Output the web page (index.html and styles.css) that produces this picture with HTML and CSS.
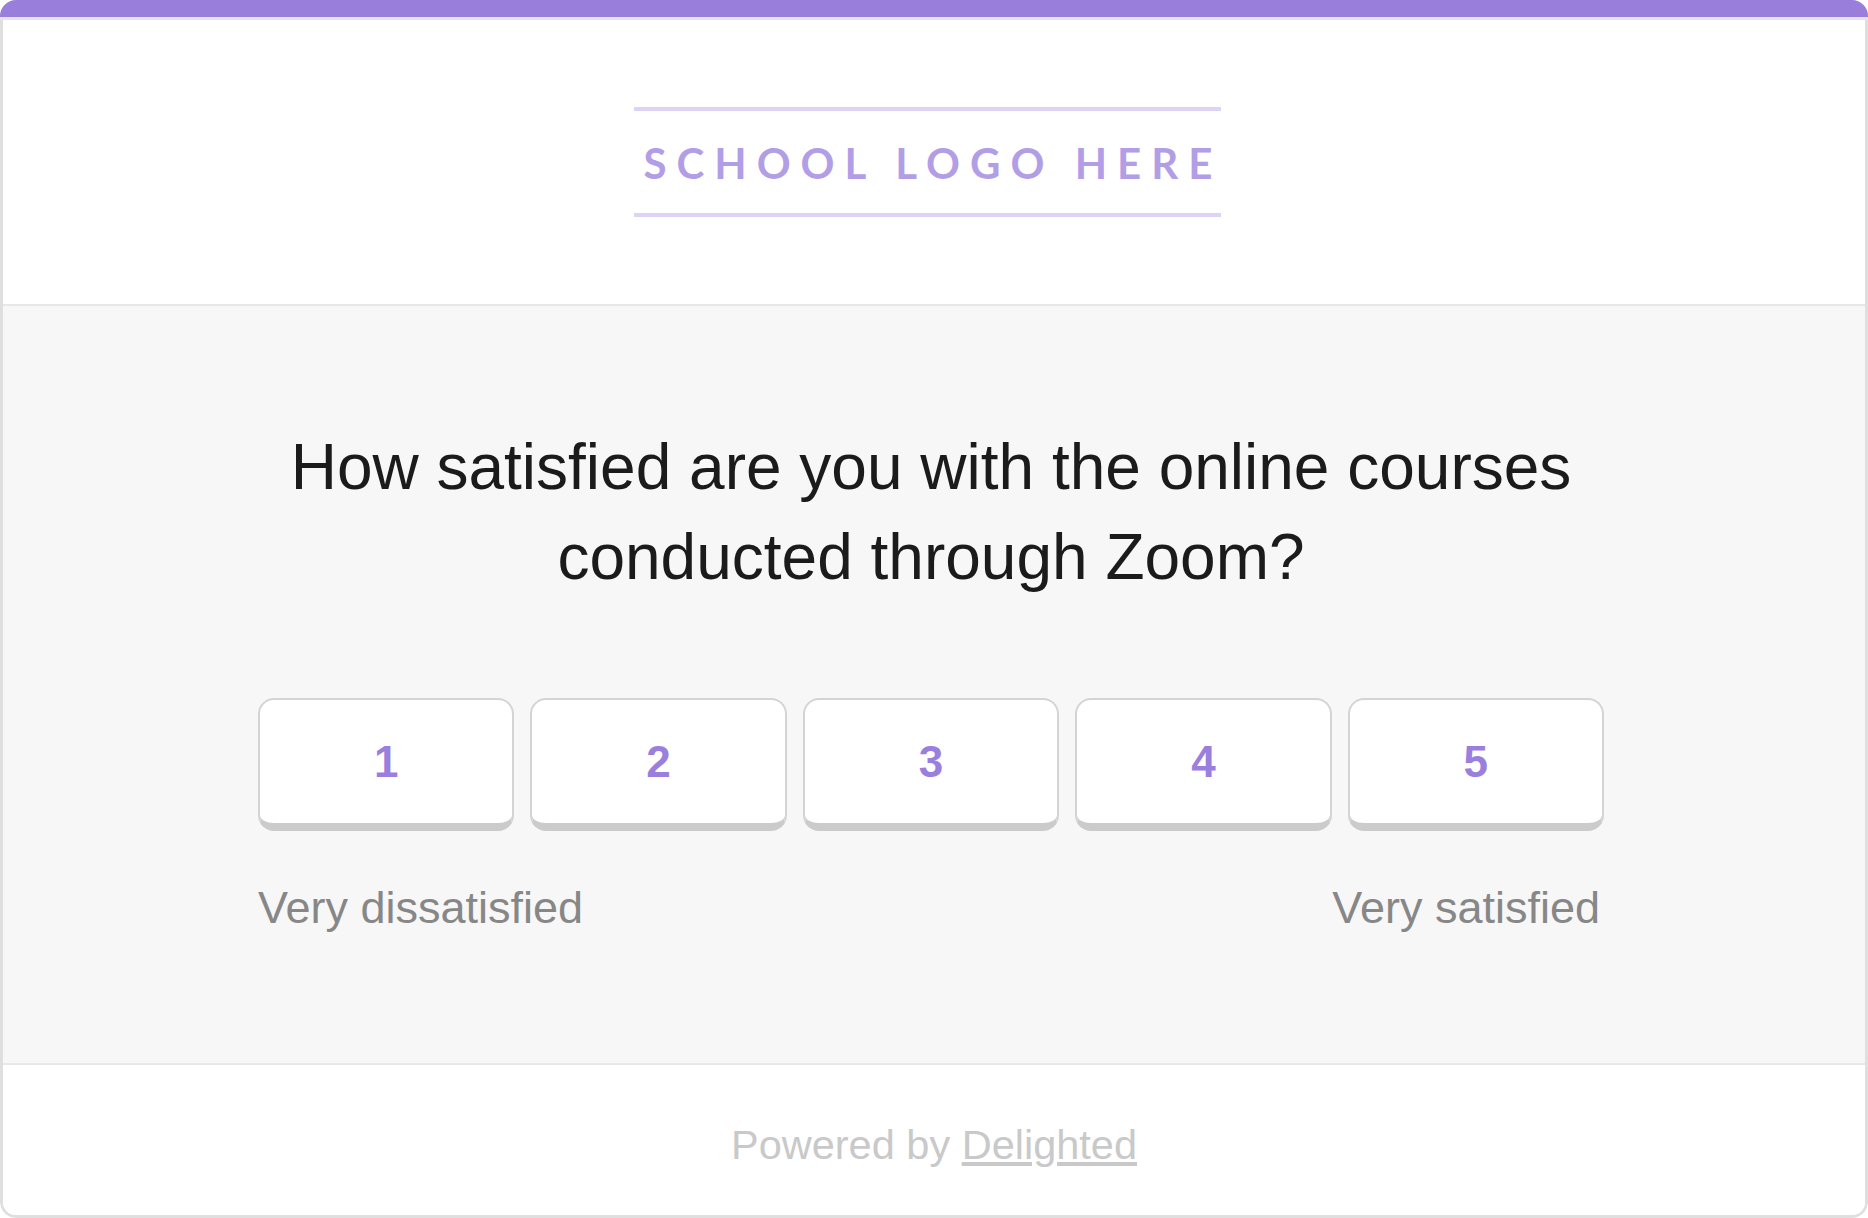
FILE: index.html
```html
<!DOCTYPE html>
<html lang="en">

<head>
  <meta charset="UTF-8" />
  <meta name="viewport" content="width=device-width, initial-scale=1.0" />
  <title>Course Satisfaction Survey</title>
  <link rel="stylesheet" href="styles.css">
</head>

<body>
  <div class="survey-card">
    <div class="accent-bar"></div>

    <div class="card-frame">
      <!-- logo placeholder -->
      <header class="card-header">
        <div class="logo-placeholder">SCHOOL LOGO HERE</div>
      </header>

      <main class="card-body">
        <h1 class="question">How satisfied are you with the online courses conducted through Zoom?</h1>

        <div class="scale">
          <div class="scale-buttons">
            <button class="scale-btn">1</button>
            <button class="scale-btn">2</button>
            <button class="scale-btn">3</button>
            <button class="scale-btn">4</button>
            <button class="scale-btn">5</button>
          </div>
          <div class="scale-labels">
            <span>Very dissatisfied</span>
            <span>Very satisfied</span>
          </div>
        </div>
      </main>

      <footer class="card-footer">
        Powered by <a href="#">Delighted</a>
      </footer>
    </div>
  </div>
</body>

</html>
```

FILE: styles.css
```css
/* Survey email card */

html,
body {
  margin: 0;
  padding: 0;
  background-color: #ffffff;
}

body {
  font-family: 'Liberation Sans', Arial, sans-serif;
}

.survey-card {
  width: 1868px;
  height: 1218px;
  border-radius: 16px;
  overflow: hidden;
  box-sizing: border-box;
}

.accent-bar {
  height: 17px;
  background-color: #997edb;
  border-bottom: 3px solid #e4e4e4;
}

.card-frame {
  border: 3px solid #dfdfdf;
  border-top: none;
  border-radius: 0 0 16px 16px;
  overflow: hidden;
}

.card-header {
  display: flex;
  justify-content: center;
  padding: 87px 14px 87px 0;
  background-color: #ffffff;
  border-bottom: 2px solid #e8e8e8;
}

.logo-placeholder {
  width: 587px;
  height: 100px;
  padding-top: 2px;
  border-top: 4px solid #ddd3f6;
  border-bottom: 4px solid #ddd3f6;
  font-family: 'Lato', sans-serif;
  font-weight: 700;
  font-size: 42px;
  line-height: 100px;
  letter-spacing: 10px;
  text-indent: 10px;
  white-space: nowrap;
  text-align: center;
  color: #b29ee6;
}

.card-body {
  background-color: #f7f7f7;
  padding: 116px 6px 129px 0;
  border-bottom: 2px solid #e8e8e8;
}

.question {
  max-width: 1346px;
  margin: 0 auto;
  font-size: 64px;
  font-weight: 400;
  line-height: 90px;
  text-align: center;
  color: #1b1b1b;
}

.scale {
  width: 1346px;
  margin: 96px auto 0;
}

.scale-buttons {
  display: flex;
  gap: 16px;
}

.scale-btn {
  flex: 1;
  height: 133px;
  display: flex;
  align-items: center;
  justify-content: center;
  background-color: #ffffff;
  border: 2px solid #d4d4d4;
  border-bottom: 8px solid #cbcbcb;
  border-radius: 16px;
  font-family: 'Liberation Sans', Arial, sans-serif;
  font-weight: 700;
  font-size: 44px;
  line-height: 1;
  color: #9a7fdf;
  padding: 0;
  box-sizing: border-box;
}

.scale-labels {
  display: flex;
  justify-content: space-between;
  margin-top: 51px;
  padding-right: 4px;
  font-size: 45px;
  line-height: 52px;
  color: #878787;
}

.card-footer {
  background-color: #ffffff;
  padding: 56px 0 46px;
  font-size: 41.5px;
  line-height: 48px;
  text-align: center;
  color: #c9c9c9;
}

.card-footer a {
  color: #c9c9c9;
  text-decoration: underline;
}
```
